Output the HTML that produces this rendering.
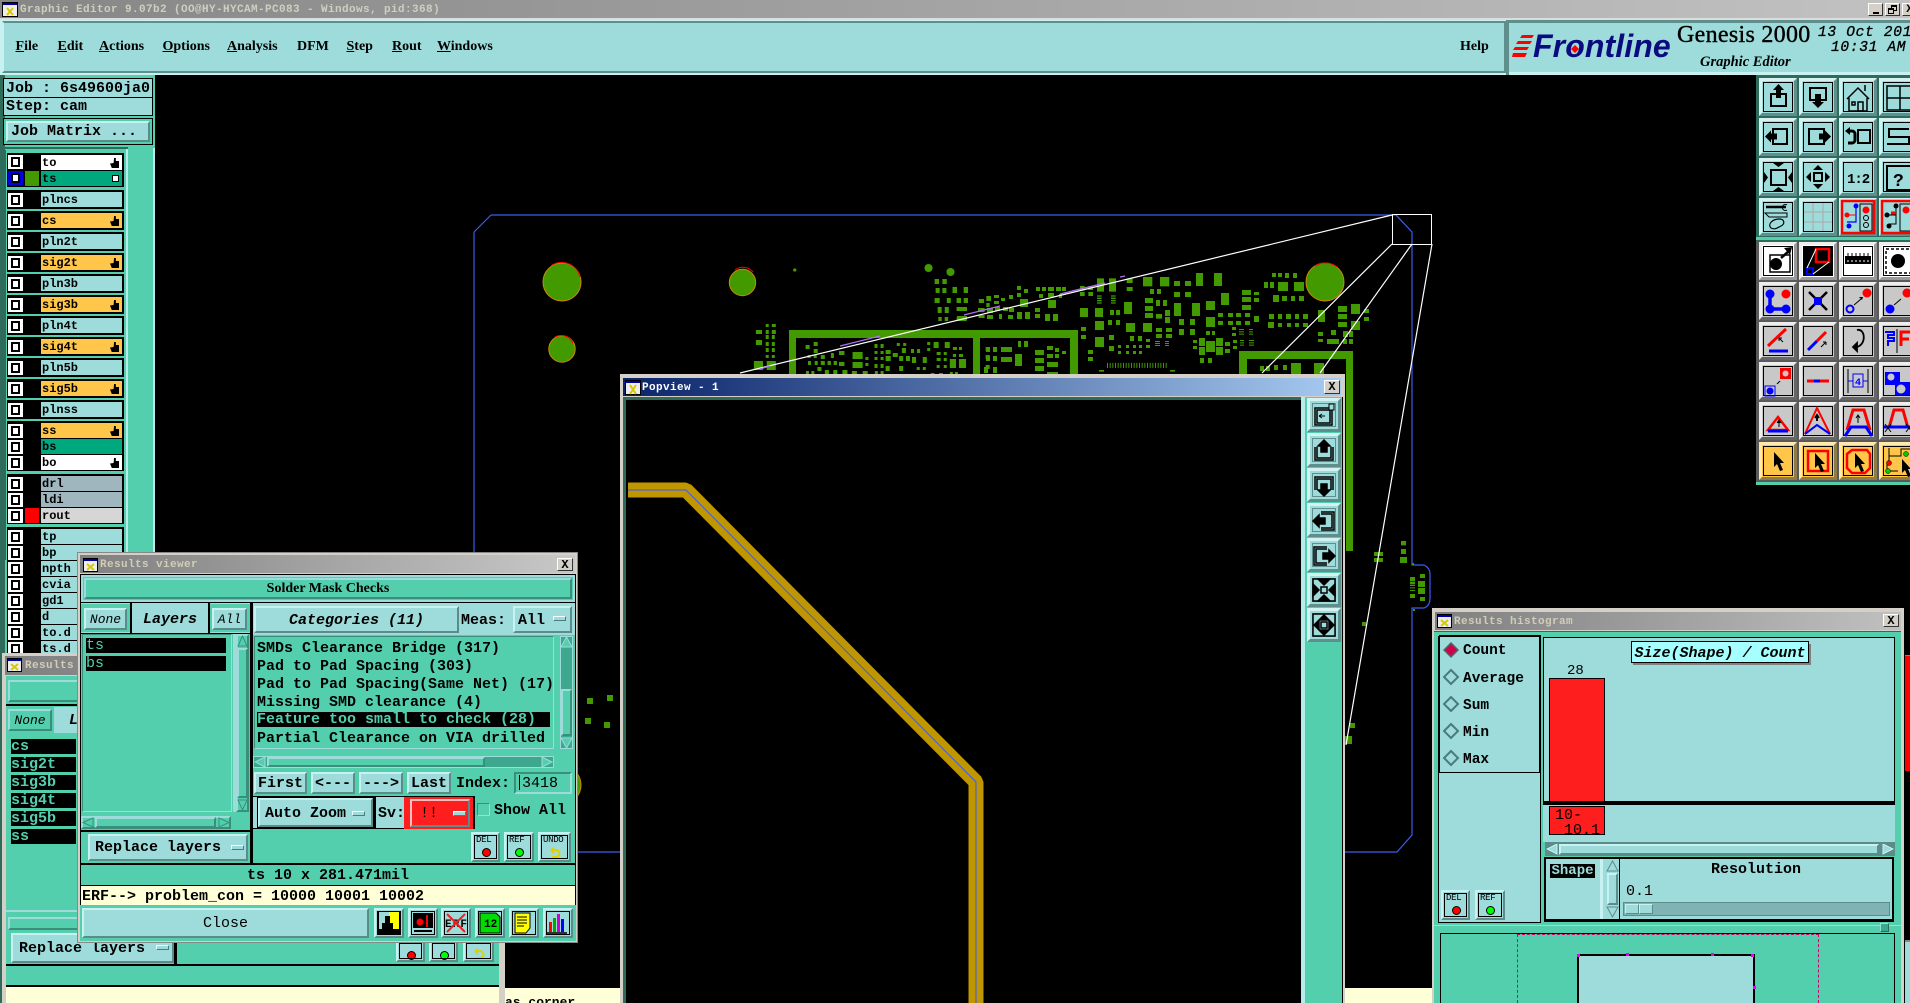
<!DOCTYPE html>
<html><head><meta charset="utf-8"><title>Graphic Editor</title>
<style>
html,body{margin:0;padding:0;background:#000}
#p{position:relative;width:1910px;height:1003px;overflow:hidden;background:#000}
#p div{position:absolute;box-sizing:border-box;white-space:pre;font:bold 15px "Liberation Mono",monospace;color:#000}
svg{position:absolute;overflow:hidden}
svg text{font-family:"Liberation Mono",monospace;font-weight:bold}
.x{display:flex;align-items:center;justify-content:center}
.y{display:flex;align-items:center}
#p .s{font:bold 14px "Liberation Serif",serif}
.t{background:#9edbdb}
.e{background:#54cfae}
.k{background:#000}
.r{border:2px solid;border-color:#c8f2f2 #5b8c8a #5b8c8a #c8f2f2;background:#9edbdb}
.q{border:2px solid;border-color:#9edbdb #3b8f7a #3b8f7a #9edbdb;background:#54cfae}
.b{width:38px;height:38px;border:3px solid;border-color:#d4f2f2 #5f8f8c #5f8f8c #d4f2f2;background:#9edbdb}
.b:after{content:"";position:absolute;left:1px;top:1px;right:1px;bottom:1px;border:1px solid #000}
.w{background:#fff;border-color:#eee #999 #999 #eee}
.g{background:#c8c8c8;border-color:#eee #666 #666 #eee}
.o{background:#ffc64a;border-color:#ffe9ad #8d7c48 #8d7c48 #ffe9ad}
.c{left:8px;width:15px;height:14px;background:#fff}
.c:after{content:"";position:absolute;left:3px;top:2px;width:9px;height:10px;box-sizing:border-box;border:2px solid #000;background:#fff}
#p .l{left:41px;width:81px;height:15px;font-size:12px;line-height:16px;padding-left:1px;background:#9edbdb}
#p .a{background:#ffc64a}
.h:after{content:"";position:absolute;right:3px;top:3px;width:9px;height:10px;background:#000;clip-path:polygon(45% 0,65% 0,65% 30%,100% 30%,100% 100%,20% 100%,0 55%,40% 50%)}
.n{width:13px;height:5px;border:1px solid;border-color:#fff #4d7d7b #4d7d7b #fff;background:#9edbdb}
.f{background:#d4d0c8}
.u{color:#d2cdb8!important;font-size:11px!important;line-height:20px!important;letter-spacing:.4px}
.d{width:29px;height:30px;border:2px solid;border-color:#c8f2f2 #5b8c8a #5b8c8a #c8f2f2;background:#9edbdb}
.d:after{content:"";position:absolute;left:1px;top:1px;right:1px;bottom:1px;border:1px solid #000}
#p .d i{position:absolute;left:3px;top:1px;font:normal 9px "Liberation Mono",monospace;color:#000;letter-spacing:-.3px}
#p .d b{position:absolute;left:9px;top:14px;width:7px;height:7px;border-radius:50%;border:1px solid #000}
.v{width:34px;height:34px;border:3px solid;border-color:#d4f2f2 #5f8f8c #5f8f8c #d4f2f2;background:#9edbdb}
.v:after{content:"";position:absolute;left:2px;top:2px;right:2px;bottom:2px;border:1px solid #5f8f8c}
</style></head><body><div id="p">

<!-- PCB canvas -->
<svg style="left:0;top:0" width="1910" height="1003">
<path d="M491 215H1396L1412 232V565H1424Q1430 568 1430 574V598Q1430 606 1424 608H1412V835L1397 852H491M474 232V852M474 232L491 215" fill="none" stroke="#3a5cf0" stroke-width="1.2"/>
<g fill="#429900" stroke="#d08a00" stroke-width="1">
<circle cx="562" cy="282" r="19"/><circle cx="742.5" cy="282.5" r="13.2"/><circle cx="562" cy="349" r="13.2"/><circle cx="1325" cy="282" r="19"/><circle cx="562" cy="785" r="19"/>
</g>
<g fill="none" stroke="#f00" stroke-width="1"><path d="M552 265a19 19 0 0 1 28 12M735 270a13 13 0 0 1 18 2M555 337a13 13 0 0 1 18 6M1315 266a19 19 0 0 1 22 1"/></g>
<g fill="#429900">
<path d="M789 330H1078V374H1070V338H980V374H973V338H796V374H789zM1239 351H1353V551H1346V359H1247V374H1239z"/>
<path d="M587 698h6v6h-6zM607 695h6v6h-6zM585 718h6v6h-6zM604 722h6v6h-6zM1344 736h8v8h-8zM1350 723h5v5h-5z"/>
</g>
<g fill="#429900" transform="translate(950,200) scale(.33333)">
<path d="M441 235h21v40h-21zM477 235h21v40h-21zM530 235h18v14h-18zM530 261h18v12h-18zM390 258h14v14h-14zM390 276h14v12h-14zM415 258h14v12h-14zM415 276h14v12h-14zM441 286h14v4h-14zM441 293h14v4h-14zM441 300h14v4h-14zM441 307h14v4h-14zM483 286h14v4h-14zM483 293h14v4h-14zM483 300h14v4h-14zM483 307h14v4h-14zM579 231h28v28h-28zM630 231h28v28h-28zM672 243h18v15h-18zM705 243h18v15h-18zM738 219h21v39h-21zM792 219h24v39h-24zM600 267h12v15h-12zM621 267h12v15h-12zM672 276h18v15h-18zM705 276h18v15h-18zM813 279h24v36h-24zM585 294h24v15h-24zM618 300h12v18h-12zM639 300h12v18h-12zM672 309h21v39h-21zM726 309h24v39h-24zM768 303h27v27h-27zM522 306h24v36h-24zM585 318h24v15h-24zM585 339h24v15h-24zM618 342h18v14h-18zM645 330h15v18h-15zM645 351h15v18h-15zM390 324h24v27h-24zM435 324h24v27h-24zM480 330h12v15h-12zM498 330h12v15h-12zM474 360h12v15h-12zM498 360h12v15h-12zM435 363h27v27h-27zM528 369h27v27h-27zM579 369h27v27h-27zM618 384h18v12h-18zM648 384h18v12h-18zM618 402h18v12h-18zM648 402h18v12h-18zM687 357h15v18h-15zM720 357h15v18h-15zM768 351h27v30h-27zM687 387h15v18h-15zM720 387h15v18h-15zM393 381h15v12h-15zM393 405h15v12h-15zM477 405h15v15h-15zM540 408h12v15h-12zM564 408h12v15h-12zM435 411h27v30h-27zM477 438h15v15h-15zM504 435h9v9h-9zM528 435h9v9h-9zM549 435h9v9h-9zM567 435h9v9h-9zM588 435h12v9h-12zM504 453h9v9h-9zM528 453h9v9h-9zM549 453h9v9h-9zM567 453h9v9h-9zM588 417h12v9h-12zM414 450h15v12h-15zM414 471h15v12h-15zM615 423h15v3h-15zM615 429h15v3h-15zM615 435h15v3h-15zM645 423h12v3h-12zM645 429h12v3h-12zM645 435h12v3h-12z"/>
<path d="M768 393h12v12h-12zM786 393h9v12h-9zM729 420h12v9h-12zM729 438h12v9h-12zM747 414h18v24h-18zM747 441h18v24h-18zM768 423h27v33h-27zM798 414h21v24h-21zM798 441h21v24h-21zM825 426h15v12h-15zM825 447h15v12h-15zM750 474h12v15h-12zM774 474h12v15h-12zM804 339h15v12h-15zM834 339h15v12h-15zM858 339h15v12h-15zM885 339h15v12h-15zM804 363h15v12h-15zM834 363h15v12h-15zM858 363h15v12h-15zM885 363h15v12h-15zM846 381h12v9h-12zM846 399h12v9h-12zM849 420h12v9h-12zM849 438h12v9h-12zM867 387h15v3h-15zM867 394h15v3h-15zM867 401h15v3h-15zM897 387h12v3h-12zM897 394h12v3h-12zM897 401h12v3h-12zM870 420h12v3h-12zM870 427h12v3h-12zM870 434h12v3h-12zM897 420h15v3h-15zM897 427h15v3h-15zM897 434h15v3h-15zM876 270h27v15h-27zM876 291h27v15h-27zM876 315h27v15h-27zM912 276h15v9h-15zM912 294h15v12h-15zM912 348h15v18h-15zM942 246h12v18h-12zM960 246h12v18h-12zM984 246h30v27h-30zM1032 246h30v27h-30zM966 219h12v12h-12zM984 219h12v12h-12zM1005 219h12v15h-12zM1029 219h12v15h-12zM969 285h18v21h-18zM996 288h15v15h-15zM1023 288h12v15h-12zM1047 288h15v15h-15zM957 342h15v15h-15zM984 342h12v15h-12zM1008 342h15v15h-15zM1035 342h12v15h-12zM1059 342h15v15h-15zM954 366h18v18h-18zM984 369h12v12h-12zM1011 369h12v12h-12zM1035 369h12v12h-12zM1059 369h15v12h-15zM1104 330h21v36h-21zM1164 318h27v18h-27zM1164 342h27v15h-27zM1164 366h27v15h-27zM1203 312h27v30h-27zM1203 363h27v27h-27zM1242 327h15v12h-15zM1242 351h15v12h-15zM1104 396h15v12h-15zM1104 417h15v9h-15zM1143 390h15v15h-15zM1179 393h15v18h-15zM1197 393h12v18h-12zM1131 417h21v15h-21zM1152 417h15v15h-15zM1179 417h12v15h-12zM1197 417h12v15h-12zM930 498h12v15h-12zM948 498h12v15h-12zM972 495h12v15h-12zM999 495h12v15h-12zM1023 489h30v36h-30zM1092 489h30v36h-30zM447 510h15v5h-15zM660 510h15v5h-15z"/>
<path d="M9 261h12v18h-12zM42 261h12v18h-12zM21 294h12v15h-12zM42 294h12v15h-12zM87 297h15v12h-15zM111 288h12v15h-12zM132 285h15v9h-15zM153 294h12v9h-12zM177 285h12v12h-12zM132 303h15v9h-15zM21 321h30v12h-30zM84 324h18v12h-18zM111 324h18v15h-18zM135 321h15v12h-15zM159 321h15v12h-15zM177 324h15v12h-15zM201 258h12v12h-12zM222 267h12v12h-12zM258 261h12v12h-12zM276 261h12v12h-12zM294 261h18v12h-18zM318 261h15v12h-15zM336 261h12v12h-12zM201 279h12v12h-12zM267 282h12v12h-12zM294 279h18v12h-18zM327 282h9v12h-9zM210 297h24v24h-24zM294 300h24v24h-24zM255 324h15v12h-15zM255 342h15v12h-15zM201 336h15v21h-15zM225 336h15v21h-15zM285 342h15v21h-15zM309 342h15v21h-15zM111 345h18v12h-18zM147 342h9v15h-9zM174 345h15v12h-15zM21 348h30v12h-30zM9 441h12v9h-12zM27 441h9v9h-9zM9 462h9v9h-9zM30 462h9v9h-9zM0 477h18v27h-18zM27 477h21v27h-21zM108 441h12v15h-12zM129 441h12v15h-12zM153 441h33v15h-33zM204 423h9v18h-9zM222 423h12v18h-12zM255 450h27v15h-27zM291 438h18v12h-18zM315 444h12v12h-12zM336 453h12v9h-12zM108 468h12v15h-12zM129 468h12v15h-12zM153 471h33v15h-33zM195 462h21v36h-21zM255 474h27v15h-27zM291 462h18v12h-18zM315 462h12v12h-12zM255 498h27v15h-27zM291 486h33v15h-33zM102 501h12v18h-12zM129 501h12v18h-12zM291 516h33v6h-33z"/>
<line x1="471" y1="496" x2="651" y2="496" stroke="#429900" stroke-width="15" stroke-dasharray="3,5"/>
</g>
<g fill="#429900" transform="translate(460,200) scale(.3378,.33333)">
<circle cx="1387" cy="204" r="12"/><circle cx="1452" cy="216" r="12"/><circle cx="991" cy="210" r="5"/>
<path d="M1405 237h13v15h-13zM1428 237h13v15h-13zM1408 264h12v15h-12zM1428 264h12v15h-12zM1458 261h12v18h-12zM1491 261h12v18h-12zM1405 294h15v15h-15zM1441 294h12v15h-12zM1470 294h12v15h-12zM1491 294h12v15h-12zM1414 321h12v18h-12zM1435 321h12v18h-12zM1470 321h30v12h-30zM1416 351h10v12h-10zM1435 351h10v12h-10zM1470 351h30v12h-30zM1536 297h15v12h-15zM1535 324h18v12h-18zM1558 288h10v15h-10zM1558 309h10v12h-10zM1535 345h18v9h-18zM876 390h18v12h-18zM905 372h9v9h-9zM923 372h12v9h-12zM905 390h9v12h-9zM923 390h12v12h-12zM905 405h9v12h-9zM923 405h9v12h-9zM876 420h18v15h-18zM905 426h9v12h-9zM923 426h9v12h-9zM905 444h9v12h-9zM923 444h9v12h-9zM905 465h9v9h-9zM923 465h9v9h-9zM870 483h27v27h-27zM908 483h27v27h-27zM1023 435h12v12h-12zM1047 426h12v12h-12zM1047 447h12v12h-12zM1029 465h9v9h-9zM1047 465h9v9h-9zM1068 465h12v12h-12zM1098 459h9v15h-9zM1122 453h16v12h-16zM1030 483h9v12h-9zM1050 483h9v12h-9zM1068 483h12v12h-12zM1088 483h10v12h-10zM1106 483h10v12h-10zM1122 486h16v12h-16zM1162 456h30v21h-30zM1200 471h9v9h-9zM1162 486h30v18h-30zM1200 489h9v9h-9zM1227 432h9v12h-9zM1245 432h9v12h-9zM1227 453h9v9h-9zM1245 453h9v9h-9zM1260 450h15v12h-15zM1227 471h9v9h-9zM1245 471h9v9h-9zM1260 468h15v15h-15zM1227 492h9v12h-9zM1245 492h9v12h-9zM1260 498h12v15h-12zM1281 459h15v12h-15zM1293 429h9v9h-9zM1312 429h9v9h-9zM1308 444h12v15h-12zM1335 447h9v12h-9zM1353 447h9v12h-9zM1300 468h12v15h-12zM1320 468h12v15h-12zM1338 471h12v18h-12zM1370 471h12v18h-12zM1383 426h9v9h-9zM1383 444h9v9h-9zM1402 426h15v18h-15zM1435 426h15v18h-15zM1411 456h12v9h-12zM1432 456h9v9h-9zM1459 441h12v9h-12zM1477 441h9v9h-9zM1459 462h9v9h-9zM1477 462h9v9h-9zM1411 474h12v9h-12zM1432 474h9v9h-9zM1411 495h9v9h-9zM1432 495h9v9h-9zM1450 477h18v27h-18zM1477 477h21v27h-21zM1024 513h9v9h-9zM1040 513h9v9h-9zM1058 501h12v12h-12zM1080 510h12v12h-12zM1105 510h12v12h-12zM1132 510h15v12h-15zM1160 513h15v9h-15zM1192 513h15v9h-15zM1228 513h9v9h-9zM1245 513h9v9h-9zM1300 498h12v15h-12zM1352 501h9v9h-9zM1370 501h9v9h-9zM1393 519h12v3h-12zM1418 519h12v3h-12zM1450 516h9v6h-9zM1465 516h9v6h-9zM1556 441h12v12h-12zM1556 465h12v12h-12zM1556 495h12v12h-12z"/>
</g>
<g fill="#429900" transform="translate(1290,380) scale(.33333)">
<path d="M333 483h15v13h-15zM333 507h15v15h-15zM330 531h21v18h-21zM252 516h27v12h-27zM252 534h27v12h-27zM216 726h12v12h-12zM360 591h15v12h-15zM360 605h15v8h-15zM360 615h15v3h-15zM360 622h15v3h-15zM360 630h15v3h-15zM360 642h15v12h-15zM384 603h21v18h-21zM384 624h21v18h-21zM390 582h15v12h-15zM390 651h15v12h-15zM366 549h6v6h-6zM369 687h6v6h-6z"/>
</g>
<rect x="1392.5" y="214.5" width="39" height="30" fill="none" stroke="#fff"/>
<g stroke="#fff" fill="none" stroke-width="1.2">
<path d="M1392 215L740 373M1392 244L1262 373M1412 244L1320 373M1432 244L1346 745"/>
</g>
<path d="M1125 276L1120 277M1000 306L964 315M1105 283L1060 294M880 336L840 346M770 366L760 369" stroke="#b070f0" stroke-width="1.2"/>
</svg>

<!-- Title bar -->
<div style="left:0;top:0;width:1910px;height:18px;background:linear-gradient(90deg,#868686,#c2c2c2)"></div>
<div class="u" style="left:20px;top:0;height:18px;color:#cfcfc0!important">Graphic Editor 9.07b2 (OO@HY-HYCAM-PC083 - Windows, pid:368)</div>
<svg style="left:2px;top:2px" width="16" height="15"><rect x=".5" y=".5" width="15" height="14" fill="#eee" stroke="#000"/><rect x="1" y="1" width="14" height="2" fill="#00a"/><path d="M5 6l6 7M11 6l-6 7" stroke="#d8c800" stroke-width="2"/></svg>
<div class="f" style="left:1868px;top:3px;width:15px;height:13px;border:1px solid;border-color:#fff #333 #333 #fff"><div style="left:4px;top:8px;width:6px;height:2px;background:#000"></div></div>
<div class="f" style="left:1885px;top:3px;width:15px;height:13px;border:1px solid;border-color:#fff #333 #333 #fff"><div style="left:5px;top:1px;width:6px;height:6px;border:1px solid #000;border-top-width:2px"></div><div class="f" style="left:2px;top:4px;width:6px;height:6px;border:1px solid #000;border-top-width:2px"></div></div>
<div class="f x" style="left:1902px;top:3px;width:15px;height:13px;border:1px solid;border-color:#fff #333 #333 #fff;font-size:11px">X</div>

<!-- Menu -->
<div style="left:0;top:18px;width:1910px;height:2px;background:#ddd"></div>
<div style="left:0;top:20px;width:1910px;height:55px;background:#c8f2f2"></div>
<div class="t" style="left:2px;top:21px;width:1504px;height:52px;border:2px solid;border-color:#5f8f8c #5f8f8c #5f8f8c #c8f2f2"></div>
<div class="t" style="left:1509px;top:20px;width:401px;height:52px;border-top:3px solid #5f8f8c"></div>
<div style="left:1506px;top:20px;width:3px;height:55px;background:#5f8f8c"></div>
<div class="s" style="left:15.5px;top:39px"><u>F</u>ile</div>
<div class="s" style="left:57.5px;top:39px"><u>E</u>dit</div>
<div class="s" style="left:99px;top:39px"><u>A</u>ctions</div>
<div class="s" style="left:162.5px;top:39px"><u>O</u>ptions</div>
<div class="s" style="left:227px;top:39px"><u>A</u>nalysis</div>
<div class="s" style="left:297px;top:39px">DFM</div>
<div class="s" style="left:346.5px;top:39px"><u>S</u>tep</div>
<div class="s" style="left:392px;top:39px"><u>R</u>out</div>
<div class="s" style="left:437px;top:39px"><u>W</u>indows</div>
<div class="s" style="left:1460px;top:39px">Help</div>
<!-- logo -->
<svg style="left:1512px;top:33px" width="24" height="26"><path d="M10 2h12l-2 3H8zM6 8h14l-2 3H4zM3 14h14l-2 3H1zM1 20h14l-2 4H0z" fill="#f00"/></svg>
<div style="left:1533px;top:27px;font:italic bold 32px 'Liberation Sans',sans-serif;color:#0b0b80;letter-spacing:.1px;line-height:38px">Frontline</div>
<svg style="left:1568px;top:42px" width="14" height="14"><path d="M7 3l4 4-4 4-4-4z" fill="#f00"/></svg>
<div style="left:1677px;top:21px;font:normal 24px 'Liberation Serif',serif;letter-spacing:.3px;line-height:28px;-webkit-text-stroke:.4px #000">Genesis 2000</div>
<div style="left:1700px;top:53px;font:italic bold 14.5px 'Liberation Serif',serif;line-height:18px">Graphic Editor</div>
<div style="left:1818px;top:25px;font:italic 14.5px 'Liberation Mono',monospace;line-height:17px;letter-spacing:.7px;-webkit-text-stroke:.3px #000">13 Oct 2014</div>
<div style="left:1831px;top:40px;font:italic 14.5px 'Liberation Mono',monospace;line-height:17px;letter-spacing:.7px;-webkit-text-stroke:.3px #000">10:31 AM</div>

<!-- Left panel -->
<div class="e" style="left:0;top:75px;width:155px;height:928px"></div>
<div style="left:0;top:75px;width:5px;height:928px;background:#2e6b5a"></div>
<div class="k" style="left:3px;top:78px;width:150px;height:38px"></div>
<div class="t y" style="left:4px;top:79px;width:148px;height:18px;padding-left:2px">Job : 6s49600ja0</div>
<div class="t y" style="left:4px;top:98px;width:148px;height:17px;padding-left:2px">Step: cam</div>
<div class="k" style="left:3px;top:118px;width:150px;height:27px"></div>
<div class="e" style="left:4px;top:119px;width:148px;height:25px"></div>
<div class="r y" style="left:6px;top:121px;width:144px;height:21px;padding-left:3px">Job Matrix ...</div>
<div style="left:0;top:147px;width:128px;height:2px;background:#2e6b5a"></div>
<div style="left:128px;top:148px;width:27px;height:410px;background:#54cfae;border-right:2px solid #b6ecec"></div>
<div style="left:126px;top:149px;width:2px;height:410px;background:#b6ecec"></div>
<div style="left:5px;top:150px;width:1px;height:410px;background:#2e6b5a"></div>

<div class="k" style="left:7px;top:153px;width:117px;height:34px"></div>
<div class="c" style="top:155px"></div><div class="l h" style="top:155px;background:#fff">to</div>
<div class="c" style="top:171px;outline:3px solid #00d;outline-offset:-3px"></div><div style="left:25px;top:171px;width:14px;height:15px;background:#429900"></div><div class="l" style="top:171px;background:#00a87e">ts<div style="right:3px;top:4px;width:7px;height:7px;border:1px solid #000;background:#fff"></div></div>
<div class="k" style="left:7px;top:190px;width:117px;height:19px"></div><div class="c" style="top:193px"></div><div class="l" style="top:192px">plncs</div>
<div class="k" style="left:7px;top:211px;width:117px;height:19px"></div><div class="c" style="top:214px"></div><div class="l a h" style="top:213px">cs</div>
<div class="k" style="left:7px;top:232px;width:117px;height:19px"></div><div class="c" style="top:235px"></div><div class="l" style="top:234px">pln2t</div>
<div class="k" style="left:7px;top:253px;width:117px;height:19px"></div><div class="c" style="top:256px"></div><div class="l a h" style="top:255px">sig2t</div>
<div class="k" style="left:7px;top:274px;width:117px;height:19px"></div><div class="c" style="top:277px"></div><div class="l" style="top:276px">pln3b</div>
<div class="k" style="left:7px;top:295px;width:117px;height:19px"></div><div class="c" style="top:298px"></div><div class="l a h" style="top:297px">sig3b</div>
<div class="k" style="left:7px;top:316px;width:117px;height:19px"></div><div class="c" style="top:319px"></div><div class="l" style="top:318px">pln4t</div>
<div class="k" style="left:7px;top:337px;width:117px;height:19px"></div><div class="c" style="top:340px"></div><div class="l a h" style="top:339px">sig4t</div>
<div class="k" style="left:7px;top:358px;width:117px;height:19px"></div><div class="c" style="top:361px"></div><div class="l" style="top:360px">pln5b</div>
<div class="k" style="left:7px;top:379px;width:117px;height:19px"></div><div class="c" style="top:382px"></div><div class="l a h" style="top:381px">sig5b</div>
<div class="k" style="left:7px;top:400px;width:117px;height:19px"></div><div class="c" style="top:403px"></div><div class="l" style="top:402px">plnss</div>
<div class="k" style="left:7px;top:421px;width:117px;height:50px"></div>
<div class="c" style="top:424px"></div><div class="l a h" style="top:423px">ss</div>
<div class="c" style="top:440px"></div><div class="l" style="top:439px;background:#00a87e">bs</div>
<div class="c" style="top:456px"></div><div class="l h" style="top:455px;background:#fff">bo</div>
<div class="k" style="left:7px;top:474px;width:117px;height:50px"></div>
<div class="c" style="top:477px"></div><div class="l" style="top:476px;background:#9fb6be">drl</div>
<div class="c" style="top:493px"></div><div class="l" style="top:492px;background:#9fb6be">ldi</div>
<div class="c" style="top:509px"></div><div style="left:25px;top:508px;width:14px;height:15px;background:#f00"></div><div class="l" style="top:508px;background:#d6d6d6">rout</div>
<div class="k" style="left:7px;top:527px;width:117px;height:135px"></div>
<div class="c" style="top:530px"></div><div class="l" style="top:529px">tp</div>
<div class="c" style="top:546px"></div><div class="l" style="top:545px">bp</div>
<div class="c" style="top:562px"></div><div class="l" style="top:561px">npth</div>
<div class="c" style="top:578px"></div><div class="l" style="top:577px">cvia</div>
<div class="c" style="top:594px"></div><div class="l" style="top:593px">gd1</div>
<div class="c" style="top:610px"></div><div class="l" style="top:609px">d</div>
<div class="c" style="top:626px"></div><div class="l" style="top:625px">to.d</div>
<div class="c" style="top:642px"></div><div class="l" style="top:641px">ts.d</div>

<!-- Second results window -->
<div class="f" style="left:2px;top:653px;width:503px;height:350px"></div>
<div style="left:5px;top:656px;width:497px;height:19px;background:linear-gradient(90deg,#808080,#aaa)"></div>
<div class="u" style="left:25px;top:656px;height:19px">Results</div>
<svg style="left:7px;top:658px" width="15" height="14"><rect x=".5" y=".5" width="14" height="13" fill="#eee" stroke="#000"/><rect x="1" y="1" width="13" height="2" fill="#00a"/><path d="M4 6l7 6M11 6l-7 6" stroke="#d8c800" stroke-width="2"/></svg>
<div class="e" style="left:6px;top:676px;width:493px;height:327px"></div>
<div class="q" style="left:8px;top:680px;width:486px;height:22px"></div>
<div class="k" style="left:6px;top:704px;width:493px;height:2px"></div>
<div class="q x" style="left:8px;top:709px;width:44px;height:22px;font:italic 13px 'Liberation Mono',monospace">None</div>
<div class="t y" style="left:54px;top:707px;width:70px;height:26px;font:italic bold 15px 'Liberation Mono',monospace;padding-left:15px">Layers</div>
<div class="e" style="left:6px;top:736px;width:72px;height:174px"></div>
<div class="k y" style="left:11px;top:739px;width:65px;height:15px;color:#54cfae">cs</div>
<div class="k y" style="left:11px;top:757px;width:65px;height:15px;color:#54cfae">sig2t</div>
<div class="k y" style="left:11px;top:775px;width:65px;height:15px;color:#54cfae">sig3b</div>
<div class="k y" style="left:11px;top:793px;width:65px;height:15px;color:#54cfae">sig4t</div>
<div class="k y" style="left:11px;top:811px;width:65px;height:15px;color:#54cfae">sig5b</div>
<div class="k y" style="left:11px;top:829px;width:65px;height:15px;color:#54cfae">ss</div>
<div style="left:6px;top:910px;width:170px;height:2px;background:#9edbdb"></div>
<div class="q" style="left:8px;top:917px;width:165px;height:13px"></div>
<div class="k" style="left:174px;top:930px;width:3px;height:34px"></div>
<div class="r y" style="left:11px;top:933px;width:163px;height:30px;padding-left:6px">Replace layers<div class="n" style="left:143px;top:10px"></div></div>
<div class="k" style="left:6px;top:964px;width:493px;height:2px"></div>
<div class="d" style="left:396px;top:940px;height:22px"><b style="background:#f00;top:9px"></b></div>
<div class="d" style="left:429px;top:940px;height:22px"><b style="background:#0f0;top:9px"></b></div>
<div class="d" style="left:463px;top:940px;height:22px;width:31px"><svg style="left:7px;top:6px" width="14" height="12"><path d="M3 3h5a3 3 0 0 1 0 7H4M3 3l3-2M3 3l3 3" fill="none" stroke="#e0d000" stroke-width="2"/></svg></div>
<div class="k" style="left:6px;top:985px;width:493px;height:2px"></div>
<div style="left:6px;top:987px;width:493px;height:16px;background:#ffffd8"></div>
<div style="left:505px;top:988px;width:115px;height:15px;background:#ffffd8;font-size:13px;line-height:30px;overflow:hidden">as corner</div>
<div style="left:1345px;top:988px;width:87px;height:15px;background:#ffffd8"></div>

<!-- Results viewer -->
<div class="f" style="left:77px;top:552px;width:501px;height:391px;border:1px solid #888"></div>
<div style="left:80px;top:555px;width:495px;height:18px;background:linear-gradient(90deg,#808080,#c8c8c8)"></div>
<svg style="left:83px;top:558px" width="15" height="14"><rect x=".5" y=".5" width="14" height="13" fill="#eee" stroke="#000"/><rect x="1" y="1" width="13" height="2" fill="#00a"/><path d="M4 6l7 6M11 6l-7 6" stroke="#d8c800" stroke-width="2"/></svg>
<div class="u" style="left:100px;top:555px">Results viewer</div>
<div class="f x" style="left:557px;top:558px;width:16px;height:13px;border:1px solid;border-color:#fff #333 #333 #fff;font-size:12px">X</div>
<div class="k" style="left:80px;top:574px;width:496px;height:367px"></div>
<div class="e" style="left:81px;top:575px;width:494px;height:27px;border:2px solid;border-color:#9edbdb"></div>
<div class="q x s" style="left:84px;top:578px;width:488px;height:21px;padding-top:1px">Solder Mask Checks</div>
<!-- left col -->
<div class="t" style="left:81px;top:603px;width:170px;height:30px"></div>
<div class="e" style="left:81px;top:604px;width:50px;height:28px"></div>
<div class="r x" style="left:84px;top:608px;width:43px;height:22px;font:italic 13px 'Liberation Mono',monospace">None</div>
<div class="k" style="left:130px;top:603px;width:2px;height:30px"></div>
<div class="x" style="left:132px;top:605px;width:76px;height:28px;font:italic bold 15px 'Liberation Mono',monospace">Layers</div>
<div class="k" style="left:208px;top:603px;width:2px;height:30px"></div>
<div class="e" style="left:210px;top:604px;width:40px;height:28px"></div>
<div class="r x" style="left:212px;top:608px;width:35px;height:22px;font:italic 13px 'Liberation Mono',monospace">All</div>
<div class="e" style="left:81px;top:634px;width:170px;height:229px"></div>
<div class="e" style="left:82px;top:634px;width:150px;height:178px;border:1px solid;border-color:#3b8f7a #9edbdb #9edbdb #3b8f7a"></div>
<div class="k" style="left:86px;top:638px;width:140px;height:15px;color:#54cfae;font-weight:normal;line-height:15px">ts</div>
<div class="k" style="left:86px;top:656px;width:140px;height:15px;color:#54cfae;font-weight:normal;line-height:15px">bs</div>
<div style="left:233px;top:634px;width:3px;height:178px;background:#9edbdb"></div>
<div class="q" style="left:236px;top:634px;width:13px;height:178px"></div>
<div class="q" style="left:237px;top:648px;width:11px;height:150px"></div>
<svg style="left:237px;top:635px" width="11" height="178"><path d="M5.5 1L10 11H1zM1 165h9l-4.500 10z" fill="#54cfae" stroke="#3b8f7a"/></svg>
<div class="q" style="left:81px;top:816px;width:150px;height:13px"></div>
<div class="q" style="left:95px;top:817px;width:121px;height:11px"></div>
<svg style="left:82px;top:817px" width="148" height="11"><path d="M11 1L1 5.500l10 4.500zM137 1l10 4.500-10 4.500z" fill="#54cfae" stroke="#3b8f7a"/></svg>
<div class="k" style="left:81px;top:830px;width:170px;height:2px"></div>
<div class="k" style="left:250px;top:603px;width:3px;height:262px"></div>
<div class="r y" style="left:88px;top:834px;width:160px;height:27px;padding-left:5px">Replace layers<div class="n" style="left:141px;top:9px"></div></div>
<!-- right col -->
<div class="t" style="left:253px;top:603px;width:322px;height:32px"></div>
<div class="r x" style="left:254px;top:606px;width:205px;height:27px;padding-top:1px;font:italic bold 15px 'Liberation Mono',monospace">Categories (11)</div>
<div class="y" style="left:461px;top:607px;height:27px">Meas:</div>
<div class="r y" style="left:513px;top:606px;width:59px;height:27px;padding-left:3px;padding-top:1px">All<div class="n" style="left:38px;top:8px"></div></div>
<div class="e" style="left:253px;top:635px;width:322px;height:160px"></div>
<div class="e" style="left:254px;top:636px;width:300px;height:113px;border:1px solid;border-color:#3b8f7a #9edbdb #9edbdb #3b8f7a"></div>
<div style="left:257px;top:640px;height:17px;line-height:17px">SMDs Clearance Bridge (317)</div>
<div style="left:257px;top:658px;height:17px;line-height:17px">Pad to Pad Spacing (303)</div>
<div style="left:257px;top:676px;height:17px;line-height:17px">Pad to Pad Spacing(Same Net) (17)</div>
<div style="left:257px;top:694px;height:17px;line-height:17px">Missing SMD clearance (4)</div>
<div class="k" style="left:257px;top:712px;width:293px;height:15px;line-height:15px;color:#54cfae">Feature too small to check (28)</div>
<div style="left:257px;top:730px;height:17px;line-height:17px">Partial Clearance on VIA drilled</div>
<div style="left:560px;top:636px;width:13px;height:113px;background:#3da88e;border:1px solid #9edbdb"></div>
<div class="q" style="left:561px;top:689px;width:11px;height:47px"></div>
<svg style="left:560px;top:636px" width="13" height="113"><path d="M6.500 1L12 11H1zM1 102h11l-5.500 10z" fill="#54cfae" stroke="#9edbdb"/></svg>
<div style="left:253px;top:756px;width:301px;height:12px;background:#3da88e;border:1px solid #9edbdb"></div>
<div class="q" style="left:267px;top:757px;width:218px;height:10px"></div>
<svg style="left:254px;top:757px" width="300" height="11"><path d="M11 0L1 5l10 5zM288 0l10 5-10 5z" fill="#54cfae" stroke="#9edbdb"/></svg>
<div class="r x" style="left:254px;top:772px;width:53px;height:22px">First</div>
<div class="r x" style="left:311px;top:772px;width:44px;height:22px">&lt;---</div>
<div class="r x" style="left:359px;top:772px;width:44px;height:22px">---&gt;</div>
<div class="r x" style="left:407px;top:772px;width:44px;height:22px">Last</div>
<div class="y" style="left:456px;top:772px;height:22px">Index:</div>
<div class="y" style="left:514px;top:772px;width:58px;height:22px;background:#54cfae;border:2px solid;border-color:#3b8f7a #9edbdb #9edbdb #3b8f7a;padding-left:6px;font-weight:normal">3418</div>
<div class="k" style="left:519px;top:775px;width:1px;height:15px"></div>
<div class="e" style="left:253px;top:795px;width:322px;height:68px"></div>
<div class="k" style="left:253px;top:796px;width:222px;height:33px"></div>
<div class="r y" style="left:258px;top:798px;width:115px;height:29px;padding-left:5px;padding-top:1px;border-left-width:2px">Auto Zoom<div class="n" style="left:92px;top:11px"></div></div>
<div class="t y" style="left:253px;top:797px;width:4px;height:31px"></div>
<div class="t y" style="left:376px;top:797px;width:28px;height:31px;padding-left:2px;padding-top:1px">Sv:</div>
<div style="left:404px;top:797px;width:69px;height:32px;background:#ff1e1e"></div>
<div class="y" style="left:410px;top:799px;width:60px;height:28px;background:#ff1e1e;border:2px solid;border-color:#ffc0c0 #5b8c8a #5b8c8a #ffc0c0;padding-left:8px;font-weight:normal">!!<div class="n" style="left:41px;top:10px"></div></div>
<div style="left:477px;top:803px;width:13px;height:13px;background:#54cfae;border:1px solid;border-color:#3b8f7a #9edbdb #9edbdb #3b8f7a"></div>
<div class="y" style="left:494px;top:801px;height:18px">Show All</div>
<div class="d" style="left:471px;top:832px"><i>DEL</i><b style="background:#f00"></b></div>
<div class="d" style="left:504px;top:832px;width:30px"><i>REF</i><b style="background:#0f0"></b></div>
<div class="d" style="left:538px;top:832px;width:33px"><i>UNDO</i><svg style="left:8px;top:13px" width="14" height="12"><path d="M3 3h5a3 3 0 0 1 0 7H4M3 3l3-2M3 3l3 3" fill="none" stroke="#e0d000" stroke-width="2"/></svg></div>
<div class="k" style="left:81px;top:863px;width:494px;height:2px"></div>
<div class="e x" style="left:81px;top:865px;width:494px;height:20px;padding-top:1px">ts 10 x 281.471mil</div>
<div class="y" style="left:81px;top:886px;width:494px;height:19px;background:#ffffd8;padding-left:1px;padding-top:1px">ERF--&gt; problem_con = 10000 10001 10002</div>
<div class="f" style="left:80px;top:905px;width:496px;height:36px;background:#54cfae"></div>
<div class="r x" style="left:82px;top:908px;width:287px;height:30px;font-weight:normal">Close</div>
<div class="d" style="left:374px;top:908px;height:30px;width:30px"></div>
<div class="d" style="left:408px;top:908px;height:30px;width:30px"></div>
<div class="d" style="left:441px;top:908px;height:30px;width:30px"></div>
<div class="d" style="left:475px;top:908px;height:30px;width:30px"></div>
<div class="d" style="left:509px;top:908px;height:30px;width:30px"></div>
<div class="d" style="left:543px;top:908px;height:30px;width:30px"></div>
<svg style="left:374px;top:908px" width="200" height="30">
<g transform="translate(4,4)"><rect width="22" height="22" fill="#000"/><rect x="1" width="10" height="17" fill="#9edbdb"/><rect x="11" width="10" height="17" fill="#ff0"/><path d="M7 4h5v7h3v6H4v-6h3z" fill="#000"/></g>
<g transform="translate(38,4)"><rect x="1" y="1" width="20" height="15" fill="#000" /><circle cx="8" cy="10" r="3.500" fill="#f00"/><rect x="14" y="3" width="2" height="12" fill="#f00"/><path d="M2 19h18" stroke="#000" stroke-width="2"/></g>
<g transform="translate(71,4)"><text x="0" y="15" font-size="11" fill="#000" textLength="22">ERF</text><path d="M2 2l18 18M20 2L2 20" stroke="#f02020" stroke-width="2"/></g>
<g transform="translate(105,5)"><path d="M1 0h16l4 4v16H1z" fill="#0d0" stroke="#000"/><text x="5" y="14" font-size="11" fill="#000">12</text></g>
<g transform="translate(140,5)"><path d="M1 0h15v15l-4 5H1z" fill="#ff0" stroke="#000"/><path d="M3 4h10M3 7h10M3 10h10M3 13h7" stroke="#000"/></g>
<g transform="translate(173,6)"><rect x="2" y="8" width="3" height="10" fill="#f00"/><rect x="6" y="4" width="3" height="14" fill="#0a0"/><rect x="10" y="0" width="3" height="18" fill="#d000d0"/><rect x="14" y="5" width="3" height="13" fill="#00f"/><path d="M0 19h20" stroke="#000" stroke-width="1.500"/></g>
</svg>

<!-- Popview -->
<div class="f" style="left:620px;top:374px;width:725px;height:629px"></div>
<div style="left:623px;top:378px;width:718px;height:18px;background:linear-gradient(90deg,#0a246a,#a6caf0)"></div>
<svg style="left:625px;top:380px" width="16" height="15"><rect x=".5" y=".5" width="15" height="14" fill="#eee" stroke="#000"/><rect x="1" y="1" width="14" height="2" fill="#00a"/><path d="M5 5l6 9M11 5l-6 9" stroke="#d8c800" stroke-width="2"/></svg>
<div style="left:642px;top:379px;color:#fff;font-size:11px;line-height:18px;letter-spacing:.4px">Popview - 1</div>
<div class="f x" style="left:1324px;top:380px;width:16px;height:14px;border:1px solid;border-color:#fff #333 #333 #fff;font-size:12px">X</div>
<div style="left:623px;top:397px;width:681px;height:3px;background:#2e6b5a"></div>
<div style="left:623px;top:397px;width:3px;height:606px;background:#2e6b5a"></div>
<div class="k" style="left:626px;top:400px;width:676px;height:603px"></div>
<svg style="left:626px;top:400px" width="676" height="603">
<path d="M2 90H60L350 382V610" fill="none" stroke="#bf9500" stroke-width="15" stroke-linejoin="bevel"/>
<path d="M2 90H60L350 382V610" fill="none" stroke="#3a5cf0" stroke-width="1"/>
</svg>
<div class="e" style="left:1301px;top:397px;width:41px;height:606px;border-left:4px solid #b6ecec"></div>
<div class="k" style="left:1342px;top:397px;width:1px;height:606px"></div>
<div class="v" style="left:1307px;top:398px"></div>
<div class="v" style="left:1307px;top:433px"></div>
<div class="v" style="left:1307px;top:468px"></div>
<div class="v" style="left:1307px;top:503px"></div>
<div class="v" style="left:1307px;top:538px"></div>
<div class="v" style="left:1307px;top:573px"></div>
<div class="v" style="left:1307px;top:608px"></div>
<svg style="left:1307px;top:398px" width="34" height="244" fill="none" stroke="#000" stroke-width="1.500">
<rect x="8" y="10" width="17" height="17"/><rect x="10" y="12" width="13" height="13"/><rect x="22" y="6" width="5" height="6" fill="#9edbdb" stroke-width="1"/><path d="M12 18h6M12 18l3-2M12 18l3 2" stroke-width="1"/>
<g transform="translate(0,35)"><path d="M8 14v13h18V14M10 14v11h14V14"/><path d="M17 7l6 6h-3v6h-6v-6h-3z" fill="#000"/></g>
<g transform="translate(0,70)"><path d="M8 22V9h18v13M10 22V11h14v11"/><path d="M17 28l6-6h-3v-6h-6v6h-3z" fill="#000"/></g>
<g transform="translate(0,105)"><path d="M14 9h13v18H14M14 11h11v14H14"/><path d="M6 18l6-6v3h6v6h-6v3z" fill="#000"/></g>
<g transform="translate(0,140)"><path d="M20 9H7v18h13M20 11H9v14h11"/><path d="M28 18l-6-6v3h-6v6h6v3z" fill="#000"/></g>
<g transform="translate(0,175)"><rect x="6" y="6" width="22" height="22"/><rect x="14" y="14" width="6" height="6"/><path d="M11 6h12l-6 6zM11 28h12l-6-6zM6 11v12l6-6zM28 11v12l-6-6z" fill="#000"/></g>
<g transform="translate(0,210)"><rect x="6" y="6" width="22" height="22"/><rect x="14" y="14" width="6" height="6"/><path d="M17 7l5 5H12zM17 27l5-5H12zM7 17l5-5v10zM27 17l-5-5v10z" fill="#000"/></g>
</svg>

<!-- Right toolbar -->
<div style="left:1756px;top:75px;width:154px;height:407px;background:#5a5a5a"></div>
<div style="left:1756px;top:75px;width:154px;height:167px;background:#2e6b5a"></div>
<div class="e" style="left:1756px;top:237px;width:154px;height:3px"></div>
<div class="e" style="left:1756px;top:482px;width:154px;height:3px"></div>
<div class="b" style="left:1759px;top:78px"></div><div class="b" style="left:1799px;top:78px"></div><div class="b" style="left:1839px;top:78px"></div><div class="b" style="left:1879px;top:78px"></div>
<div class="b" style="left:1759px;top:118px"></div><div class="b" style="left:1799px;top:118px"></div><div class="b" style="left:1839px;top:118px"></div><div class="b" style="left:1879px;top:118px"></div>
<div class="b" style="left:1759px;top:158px"></div><div class="b" style="left:1799px;top:158px"></div><div class="b" style="left:1839px;top:158px"></div><div class="b" style="left:1879px;top:158px"></div>
<div class="b" style="left:1759px;top:198px"></div><div class="b" style="left:1799px;top:198px"></div><div class="b" style="left:1839px;top:198px"></div><div class="b" style="left:1879px;top:198px"></div>
<div class="b w" style="left:1759px;top:242px"></div><div class="b w" style="left:1799px;top:242px"></div><div class="b w" style="left:1839px;top:242px"></div><div class="b w" style="left:1879px;top:242px"></div>
<div class="b g" style="left:1759px;top:282px"></div><div class="b g" style="left:1799px;top:282px"></div><div class="b g" style="left:1839px;top:282px"></div><div class="b g" style="left:1879px;top:282px"></div>
<div class="b g" style="left:1759px;top:322px"></div><div class="b g" style="left:1799px;top:322px"></div><div class="b g" style="left:1839px;top:322px"></div><div class="b g" style="left:1879px;top:322px"></div>
<div class="b g" style="left:1759px;top:362px"></div><div class="b g" style="left:1799px;top:362px"></div><div class="b g" style="left:1839px;top:362px"></div><div class="b g" style="left:1879px;top:362px"></div>
<div class="b g" style="left:1759px;top:402px"></div><div class="b g" style="left:1799px;top:402px"></div><div class="b g" style="left:1839px;top:402px"></div><div class="b g" style="left:1879px;top:402px"></div>
<div class="b o" style="left:1759px;top:442px"></div><div class="b o" style="left:1799px;top:442px"></div><div class="b o" style="left:1839px;top:442px"></div><div class="b o" style="left:1879px;top:442px"></div>

<svg style="left:1759px;top:78px" width="151" height="404">
<!-- row1 -->
<g><rect x="12" y="16" width="15" height="12" fill="none" stroke="#000" stroke-width="2"/><path d="M19.500 6l5.500 6h-3v8h-5v-8h-3z"/></g>
<g transform="translate(40,0)"><rect x="11" y="10" width="16" height="12" fill="none" stroke="#000" stroke-width="2"/><path d="M19 30l-6-6h3v-8h6v8h3z"/></g>
<g transform="translate(80,0)" fill="none" stroke="#000" stroke-width="1.500"><path d="M8 21L19 10l11 11M10 20v13h18V20"/><rect x="19" y="24" width="5" height="9"/><rect x="13" y="24" width="3" height="3"/><path d="M26 13V7"/></g>
<g transform="translate(120,0)" fill="none" stroke="#000" stroke-width="1.500"><rect x="8" y="8" width="24" height="24"/><path d="M21 8v24M8 20h24"/></g>
<!-- row2 -->
<g transform="translate(0,40)"><rect x="14" y="11" width="14" height="15" fill="none" stroke="#000" stroke-width="2"/><path d="M6 18.500l6-6v3h6v6h-6v3z"/></g>
<g transform="translate(40,40)"><rect x="10" y="11" width="15" height="15" fill="none" stroke="#000" stroke-width="2"/><path d="M32 18.500l-6-6v3h-6v6h6v3z"/></g>
<g transform="translate(80,40)"><rect x="19" y="12" width="12" height="13" fill="none" stroke="#000" stroke-width="2"/><path d="M9 13h4a3 3 0 0 1 3 3v6a3 3 0 0 1-3 3H9" fill="none" stroke="#000" stroke-width="3"/><path d="M6 13l5-4v8z"/></g>
<g transform="translate(120,40)" fill="none" stroke="#000" stroke-width="2"><path d="M30 11H10v8h20v7H8"/></g>
<!-- row3 -->
<g transform="translate(0,80)"><rect x="12" y="12" width="15" height="15" fill="none" stroke="#000" stroke-width="2"/><path d="M14 5h11l-5.500 4zM14 33h11l-5.500-4zM5 14v11l4-5.500zM33 14v11l-4-5.500z"/></g>
<g transform="translate(40,80)"><rect x="15" y="15" width="8" height="8" fill="none" stroke="#000" stroke-width="2"/><path d="M19 7l5 5H14zM19 31l5-5H14zM7 19l5-5v10zM31 19l-5-5v10z"/></g>
<text x="88" y="105" font-size="14" letter-spacing="-1">1:2</text>
<g transform="translate(120,80)"><rect x="8" y="8" width="24" height="24" fill="none" stroke="#000" stroke-width="2"/><text x="14" y="28" font-size="18">?</text></g>
<!-- row4 -->
<g transform="translate(0,120)" fill="none" stroke="#000"><path d="M7 9h20" stroke-width="2.500"/><path d="M28 7a3 3 0 1 0 0 5"/><path d="M6 15h22v4H10z"/><path d="M12 30c-4-4 2-9 8-9s6 5 2 7-6 4-10 2z" stroke-width="1.200"/></g>
<g transform="translate(40,120)" stroke="#aaa" fill="none"><path d="M14 5v28M24 5v28M5 14h28M5 24h28"/></g>
<g transform="translate(80,120)"><rect x="3" y="3" width="32" height="32" fill="#9edbdb" stroke="#f00" stroke-width="2.500"/><rect x="21" y="6" width="12" height="27" fill="none" stroke="#000"/><circle cx="27" cy="12" r="3.500" fill="#f00"/><circle cx="27" cy="20" r="2.500" fill="none" stroke="#000"/><circle cx="27" cy="27" r="2.500" fill="none" stroke="#000"/><path d="M17 8v16H8" stroke="#00f" stroke-width="1.200" fill="none"/><path d="M8 17h9" stroke="#f00"/><circle cx="17" cy="8" r="2.500" fill="#00f"/><circle cx="8" cy="17" r="2.500" fill="#f00"/><circle cx="10" cy="28" r="2.500" fill="#00f"/></g>
<g transform="translate(120,120)"><rect x="3" y="3" width="32" height="32" fill="#9edbdb" stroke="#f00" stroke-width="2.500"/><rect x="21" y="6" width="12" height="27" fill="none" stroke="#000"/><circle cx="27" cy="12" r="3.500" fill="#f00"/><circle cx="17" cy="8" r="2.500"/><circle cx="8" cy="17" r="2.500"/><circle cx="10" cy="28" r="2.500"/><path d="M17 8v18H10M8 17h9" stroke="#000" fill="none"/><path d="M12 15h5" stroke="#f00" stroke-width="3"/></g>
<!-- white row -->
<g transform="translate(0,164)"><rect x="11" y="13" width="20" height="17" fill="none" stroke="#000" stroke-width="1.500"/><circle cx="17" cy="22" r="6"/><path d="M22 16l8-7" stroke="#000" stroke-width="2.500"/><path d="M33 5l-8 1 6 7z"/></g>
<g transform="translate(40,164)"><rect x="4" y="4" width="30" height="30"/><rect x="17" y="7" width="13" height="13" fill="none" stroke="#f00" stroke-width="2.500"/><rect x="8" y="26" width="6" height="6" fill="none" stroke="#00f" stroke-width="2"/><path d="M8 26L17 7M14 32l16-12" stroke="#fff"/></g>
<g transform="translate(80,164)"><path d="M6 14h26v8H6z"/><path d="M9 14v-3M13 14v-3M17 14v-3M21 14v-3M25 14v-3M29 14v-3" stroke="#000"/><path d="M8 19h2M12 19h2M16 19h2M20 19h2M24 19h2M28 19h2" stroke="#fff"/></g>
<g transform="translate(120,164)"><rect x="7" y="7" width="26" height="24" fill="none" stroke="#000" stroke-width="1.500" stroke-dasharray="3,2"/><circle cx="19" cy="19" r="7"/></g>
<!-- row g1 -->
<g transform="translate(0,204)"><path d="M11 12v15h16" stroke="#00f" stroke-width="3.500" fill="none"/><circle cx="11" cy="12" r="4.500" fill="#00f"/><circle cx="27" cy="12" r="4.500" fill="#f00"/><circle cx="11" cy="27" r="4.500" fill="#00f"/><circle cx="27" cy="27" r="4.500" fill="#00f"/></g>
<g transform="translate(40,204)"><path d="M10 10l18 18M28 10L10 28" stroke="#000" stroke-width="2.500"/><rect x="15" y="15" width="8" height="8" fill="#00f"/></g>
<g transform="translate(80,204)"><circle cx="11" cy="27" r="3.500" fill="none" stroke="#00f" stroke-width="2"/><circle cx="28" cy="11" r="4.500" fill="#f00"/><path d="M15 23l7-6" stroke="#000"/><path d="M24 15l-4 0 3 3z"/></g>
<g transform="translate(120,204)"><circle cx="11" cy="27" r="4.500" fill="#00f"/><circle cx="28" cy="11" r="4.500" fill="#f00"/><path d="M15 23l7-6" stroke="#000"/></g>
<!-- row g2 -->
<g transform="translate(0,244)"><path d="M9 24L27 7" stroke="#f00" stroke-width="3"/><path d="M10 29h19" stroke="#00f" stroke-width="3"/><path d="M24 20l-4-4M20 16v3M20 16h3" stroke="#000"/></g>
<g transform="translate(40,244)"><path d="M9 28l9-9" stroke="#00f" stroke-width="3"/><path d="M18 19l9-9" stroke="#f00" stroke-width="3"/><path d="M22 25l5-5M27 20v3M27 20h-3" stroke="#000"/></g>
<g transform="translate(80,244)" fill="none" stroke="#000" stroke-width="1.800"><path d="M18 8c8-2 10 14 0 17"/><path d="M18 21v8l-4-4z" fill="#000"/></g>
<g transform="translate(120,244)"><path d="M6 10h9v3H9v3h6v3H9v5" fill="none" stroke="#00f" stroke-width="2"/><path d="M18 7v24" stroke="#000"/><path d="M22 24V10h10M22 17h8" fill="none" stroke="#f00" stroke-width="3"/></g>
<!-- row g3 -->
<g transform="translate(0,284)"><rect x="21" y="6" width="11" height="11" fill="#f00"/><circle cx="26.500" cy="11.500" r="3" fill="#c8c8c8"/><rect x="6" y="24" width="10" height="10" fill="none" stroke="#00f"/><circle cx="11" cy="29" r="3.500" fill="#00f"/><path d="M18 22l3-3" stroke="#000"/></g>
<g transform="translate(40,284)"><path d="M8 19h22" stroke="#f00" stroke-width="3"/><path d="M15 19h6" stroke="#00f" stroke-width="3"/></g>
<g transform="translate(80,284)"><path d="M9 7v24M29 7v24" stroke="#000"/><path d="M9 19h20" stroke="#00f"/><rect x="14" y="12" width="10" height="13" fill="#c8c8c8" stroke="#00f"/><text x="16" y="23" font-size="10" fill="#00f">4</text></g>
<g transform="translate(120,284)"><path d="M6 10h15v10h11v13H16V23H6z" fill="#00f"/><circle cx="12" cy="15" r="3.500" fill="#c8c8c8"/><circle cx="22" cy="27" r="4.500" fill="#c8c8c8"/></g>
<!-- row g4 -->
<g transform="translate(0,324)"><path d="M9 28L19 15l10 13z" fill="none" stroke="#f00" stroke-width="2.500"/><path d="M9 29h20" stroke="#00f" stroke-width="3"/><path d="M20 25v-6M18 21l2-3 2 3" stroke="#000"/></g>
<g transform="translate(40,324)" fill="none" stroke-width="2"><path d="M6 32L18 6l13 26" stroke="#f00"/><path d="M6 32l12-9 13 9" stroke="#00f"/><path d="M18 19v-5M16 16l2-3 2 3" stroke="#000"/></g>
<g transform="translate(80,324)" fill="none" stroke-width="3"><path d="M8 28l6-20h11l6 20" stroke="#f00"/><path d="M6 34l6-9h15l6 9" stroke="#00f"/><path d="M19 21v-7M17 16l2-3 2 3" stroke="#000" stroke-width="1"/></g>
<g transform="translate(120,324)" fill="none" stroke-width="3"><path d="M10 26l5-18h9l5 18" stroke="#f00"/><path d="M5 25h28" stroke="#00f"/><path d="M6 22l6 8M12 22l-6 8M27 22l6 8M33 22l-6 8" stroke="#000" stroke-width="1"/></g>
<!-- row orange -->
<g transform="translate(0,364)"><path d="M15 10v15l3-3 3 7 3-1-3-7h4z"/></g>
<g transform="translate(40,364)"><rect x="9" y="9" width="20" height="20" fill="none" stroke="#f00" stroke-width="2.500"/><path d="M16 11v15l3-3 3 7 3-1-3-7h4z"/></g>
<g transform="translate(80,364)"><path d="M13 8h15l3 4v14l-5 5H13l-5-5V12z" fill="none" stroke="#f00" stroke-width="2.500"/><path d="M16 11v15l3-3 3 7 3-1-3-7h4z"/></g>
<g transform="translate(120,364)"><path d="M10 6v14H8v9h11M10 14h12v-7h9" fill="none" stroke="#000"/><circle cx="10" cy="21" r="2.500" fill="#f00" stroke="#000" stroke-width=".5"/><circle cx="9" cy="29" r="2.500" fill="#0c0" stroke="#000" stroke-width=".5"/><circle cx="27" cy="12" r="2.500" fill="#0c0" stroke="#000" stroke-width=".5"/><path d="M23 17v14l3-3 3 7 3-1-3-7h3z"/></g>
</svg>

<!-- Histogram -->
<div class="f" style="left:1432px;top:608px;width:472px;height:395px"></div>
<div style="left:1435px;top:612px;width:466px;height:18px;background:linear-gradient(90deg,#808080,#c0c0c0)"></div>
<svg style="left:1437px;top:614px" width="15" height="14"><rect x=".5" y=".5" width="14" height="13" fill="#eee" stroke="#000"/><rect x="1" y="1" width="13" height="2" fill="#00a"/><path d="M4 6l7 6M11 6l-7 6" stroke="#d8c800" stroke-width="2"/></svg>
<div class="u" style="left:1454px;top:612px">Results histogram</div>
<div class="f x" style="left:1883px;top:614px;width:16px;height:13px;border:1px solid;border-color:#fff #333 #333 #fff;font-size:12px">X</div>
<div class="e" style="left:1434px;top:631px;width:467px;height:372px;border-top:1px solid #2e6b5a"></div>
<div class="t" style="left:1438px;top:636px;width:103px;height:287px;border:1px solid #000"></div>
<div class="k" style="left:1439px;top:635px;width:102px;height:2px"></div>
<div class="k" style="left:1439px;top:772px;width:101px;height:1px"></div>
<div class="k" style="left:1439px;top:636px;width:1px;height:137px"></div>
<div class="k" style="left:1539px;top:636px;width:1px;height:137px"></div>
<svg style="left:1443px;top:642px" width="18" height="130">
<path d="M8 1l7 7-7 7-7-7z" fill="#d0004a" stroke="#4a6a6a" stroke-width="1.500"/>
<path d="M8 28l7 7-7 7-7-7z" fill="none" stroke="#4a7a7a" stroke-width="2"/>
<path d="M8 55l7 7-7 7-7-7z" fill="none" stroke="#4a7a7a" stroke-width="2"/>
<path d="M8 82l7 7-7 7-7-7z" fill="none" stroke="#4a7a7a" stroke-width="2"/>
<path d="M8 109l7 7-7 7-7-7z" fill="none" stroke="#4a7a7a" stroke-width="2"/>
</svg>
<div class="y" style="left:1463px;top:642px;height:18px;font-size:14.500px">Count</div>
<div class="y" style="left:1463px;top:670px;height:18px;font-size:14.500px">Average</div>
<div class="y" style="left:1463px;top:697px;height:18px;font-size:14.500px">Sum</div>
<div class="y" style="left:1463px;top:724px;height:18px;font-size:14.500px">Min</div>
<div class="y" style="left:1463px;top:751px;height:18px;font-size:14.500px">Max</div>
<div class="d" style="left:1441px;top:890px"><i>DEL</i><b style="background:#f00"></b></div>
<div class="d" style="left:1475px;top:890px;width:30px"><i>REF</i><b style="background:#0f0"></b></div>
<div class="t" style="left:1543px;top:637px;width:352px;height:168px;border:1px solid #000;border-bottom:4px solid #000"></div>
<div style="left:1633px;top:644px;width:178px;height:21px;background:#808080"></div>
<div class="x" style="left:1631px;top:641px;width:178px;height:22px;background:#a6ffff;border:1px solid #000;padding-top:2px;font:italic bold 15px 'Liberation Mono',monospace">Size(Shape) / Count</div>
<div style="left:1567px;top:663px;font-weight:normal;font-size:14px;line-height:16px">28</div>
<div style="left:1549px;top:678px;width:56px;height:124px;background:#ff1e1e;border:1px solid #000"></div>
<div class="t" style="left:1543px;top:805px;width:352px;height:37px"></div>
<div style="left:1549px;top:806px;width:56px;height:29px;background:#ff1e1e;border:1px solid #000;overflow:hidden"><div style="left:5px;top:1px;font-weight:normal;font-size:15px;line-height:16px">10-</div><div style="left:14px;top:16px;font-weight:normal;font-size:15px;line-height:16px">10.1</div></div>
<div style="left:1545px;top:842px;width:350px;height:14px;background:#5b8c8a"></div>
<div class="r" style="left:1559px;top:844px;width:320px;height:11px"></div>
<svg style="left:1546px;top:844px" width="348" height="11"><path d="M11 0L1 5l10 5zM337 0l10 5-10 5z" fill="#9edbdb" stroke="#c8f2f2"/></svg>
<div class="k" style="left:1544px;top:857px;width:350px;height:65px"></div>
<div class="t" style="left:1546px;top:859px;width:54px;height:60px"></div>
<div class="k" style="left:1550px;top:864px;width:45px;height:14px;color:#9edbdb;font-size:14px;line-height:14px;text-align:center">Shape</div>
<div class="t" style="left:1600px;top:859px;width:19px;height:60px;border-left:3px solid #c8f2f2"></div>
<div class="r" style="left:1607px;top:873px;width:11px;height:32px"></div>
<svg style="left:1606px;top:860px" width="13" height="59"><path d="M6.500 1L12 11H1zM1 47h11l-5.500 10z" fill="#9edbdb" stroke="#5b8c8a"/></svg>
<div class="t" style="left:1620px;top:859px;width:272px;height:60px"></div>
<div class="x" style="left:1620px;top:861px;width:272px;height:16px">Resolution</div>
<div style="left:1626px;top:884px;font-weight:normal;line-height:16px">0.1</div>
<div style="left:1623px;top:902px;width:267px;height:14px;background:#80b4b4;border:1px solid #5b8c8a"></div>
<div class="r" style="left:1625px;top:904px;width:14px;height:10px;border-width:1px"></div>
<div class="r" style="left:1639px;top:904px;width:14px;height:10px;border-width:1px"></div>
<div style="left:1434px;top:925px;width:467px;height:1px;background:#9edbdb"></div>
<div style="left:1880px;top:923px;width:9px;height:9px;background:#3da88e;border:1px solid;border-color:#9edbdb #2e6b5a #2e6b5a #9edbdb"></div>
<div class="e" style="left:1440px;top:933px;width:455px;height:70px;border:1px solid #000;border-width:1px 1px 0 1px"></div>
<div style="left:1517px;top:934px;width:302px;height:69px;border:1px dashed #d0006a;border-bottom:0"></div>
<div class="t" style="left:1577px;top:954px;width:178px;height:49px;border:2px solid #000;border-bottom:0"></div>
<svg style="left:1570px;top:948px" width="195" height="50" fill="#f000f0"><rect x="7" y="6" width="3" height="3"/><rect x="56" y="5" width="3" height="3"/><rect x="141" y="5" width="3" height="3"/><rect x="181" y="6" width="3" height="3"/><rect x="183" y="38" width="3" height="3"/></svg>
<div style="left:1905px;top:655px;width:5px;height:116px;background:#f00;border-top:1px solid #c08000"></div>
<div class="t" style="left:1905px;top:940px;width:5px;height:63px;border-top:2px solid #888"></div>

</div></body></html>
